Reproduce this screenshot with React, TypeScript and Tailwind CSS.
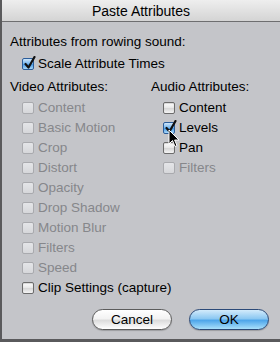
import React from "react";

type CBProps = { checked?: boolean; disabled?: boolean };

function Box({ checked, disabled }: CBProps) {
  if (checked) {
    return (
      <span className="relative w-[12px] h-[12px] shrink-0 rounded-[2px] border border-[#2b5d9a] bg-[linear-gradient(#cfe6fa,#6fb3ee_50%,#4a9ce6_55%,#a9d8f8)]">
        <svg className="absolute left-[1px] top-[-3px]" width="12" height="13" viewBox="0 0 12 13">
          <path d="M1.5 8 L4.5 11.5 L10.5 1" stroke="#111" strokeWidth="2.2" fill="none" strokeLinecap="round" strokeLinejoin="round" />
        </svg>
      </span>
    );
  }
  return (
    <span
      className={
        "w-[12px] h-[12px] shrink-0 rounded-[2px] border " +
        (disabled
          ? "border-[#a9aaae] bg-[linear-gradient(#e4e5e8,#d6d7da)]"
          : "border-[#6c6c6c] bg-[linear-gradient(#ffffff,#e6e6e6_50%,#d8d8d8_55%,#f4f4f4)] shadow-[inset_0_1px_1px_rgba(0,0,0,0.15)]")
      }
    />
  );
}

function Row({ label, checked, disabled }: CBProps & { label: string }) {
  return (
    <div className="flex items-center h-[20px] gap-[4px] whitespace-nowrap">
      <Box checked={checked} disabled={disabled} />
      <span className={disabled ? "text-[#86878b]" : "text-black"}>{label}</span>
    </div>
  );
}

export default function App() {
  const video = ["Content", "Basic Motion", "Crop", "Distort", "Opacity", "Drop Shadow", "Motion Blur", "Filters", "Speed"];
  return (
    <div
      className="relative w-[280px] h-[342px] flex flex-col bg-[#c4c5c9] border-l-2 border-b-[3px] border-[#5a5a5c] text-[13.5px] leading-none overflow-hidden"
      style={{ fontFamily: '"Liberation Sans", Arial, sans-serif' }}
    >
      <div className="h-[22px] shrink-0 flex items-center justify-center text-[14px] text-black bg-[linear-gradient(#eeeeee,#d4d4d4)] border-b border-[#6e6e70]">
        Paste Attributes
      </div>
      <div className="flex flex-col pl-[8px] pt-[12px]">
        <div className="h-[16px] flex items-center">Attributes from rowing sound:</div>
        <div className="pl-[12px] mt-[4px]">
          <Row label="Scale Attribute Times" checked />
        </div>
        <div className="flex mt-[1px]">
          <div className="w-[141px] shrink-0 flex flex-col">
            <div className="h-[23px] flex items-center">Video Attributes:</div>
            <div className="pl-[12px] flex flex-col">
              {video.map((v) => (
                <Row key={v} label={v} disabled />
              ))}
              <Row label="Clip Settings (capture)" />
            </div>
          </div>
          <div className="flex flex-col">
            <div className="h-[23px] flex items-center">Audio Attributes:</div>
            <div className="pl-[12px] flex flex-col">
              <Row label="Content" />
              <Row label="Levels" checked />
              <Row label="Pan" />
              <Row label="Filters" disabled />
            </div>
          </div>
        </div>
      </div>
      <div className="flex justify-end gap-[17px] pr-[11px] mt-auto mb-[9px]">
        <button className="w-[80px] h-[21px] rounded-full border border-[#5c5c5c] bg-[linear-gradient(#ffffff,#f3f3f3_45%,#dcdcdc_55%,#ffffff)] text-[13.5px] text-black shadow-[0_1px_1px_rgba(0,0,0,0.2)]">
          Cancel
        </button>
        <button className="w-[80px] h-[21px] rounded-full border border-[#2c4a78] bg-[linear-gradient(#d3ebfb,#8cc8f2_45%,#4fa6ea_55%,#a9e0fb)] text-[13.5px] text-black shadow-[0_1px_1px_rgba(0,0,0,0.2)]">
          OK
        </button>
      </div>
      <svg className="absolute left-[166px] top-[129px]" width="12" height="19" viewBox="0 0 12 19">
        <path d="M1 1 L1 15 L4.5 11.5 L7 17.5 L9 16.6 L6.6 11 L11 11 Z" fill="#000" stroke="#fff" strokeWidth="1" strokeLinejoin="round" />
      </svg>
    </div>
  );
}
